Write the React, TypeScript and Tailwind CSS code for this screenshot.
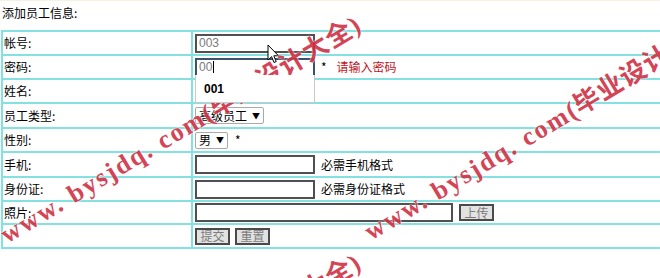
import React, { FC, ReactNode } from "react"

const font = "font-['Noto_Sans_CJK_SC','Liberation_Sans',sans-serif]"

type RowProps = {
    label?: string
    h: string
    children?: ReactNode
}

const Row: FC<RowProps> = ({ label, h, children }) => (
    <div className={`flex border-b-2 border-[#84e1e1] ${h}`}>
        <div className="w-[190px] shrink-0 border-r-2 border-[#84e1e1] pl-[1px] flex items-center">
            {label}
        </div>
        <div className="relative flex items-center gap-[6px] pl-[2px]">{children}</div>
    </div>
)

const Box: FC<{ w: string; value?: string }> = ({ w, value }) => (
    <div className={`h-[19px] ${w} border-2 border-[#505050] bg-white px-[2px] flex items-center
                    font-['Liberation_Sans',sans-serif] text-[12px] text-[#7a7a7a]`}>
        {value}
    </div>
)

const Select: FC<{ text: string; w: string }> = ({ text, w }) => (
    <div className={`h-[17px] ${w} border border-[#a9a9a9] rounded-[2px] bg-white pl-[3px] flex items-center gap-[5px]`}>
        <span>{text}</span>
        <span className="text-[8px]">▼</span>
    </div>
)

const Btn: FC<{ text: string }> = ({ text }) => (
    <div className="h-[17px] w-[35px] border-2 border-[#4a4a4a] bg-[#e2e2e2] flex items-center justify-center
                    text-[12px] text-[#7c7c7c]">
        {text}
    </div>
)

// watermark over the page
const Mark: FC<{ pos: string }> = ({ pos }) => (
    <span className={`absolute ${pos} whitespace-nowrap origin-left -rotate-[31deg] leading-[28px] text-[26px] font-bold
                      text-[#cf3144] opacity-90 [text-shadow:0_0_2px_#fff,0_0_1px_#fff]
                      font-['Liberation_Serif','Noto_Sans_CJK_SC',serif]`}>
        <span className="tracking-[2px]">www. bysjdq. com</span>
        <span className="tracking-[1px]">(毕业设计大全)</span>
    </span>
)

const App: FC = () => {
    return (
        <div className={`relative w-[660px] h-[278px] overflow-hidden bg-white text-[12px] text-black ${font}`}>
            <div className="h-px bg-[#f5f2e2]"/>
            <div className="h-[29px] pl-[2px] pt-[4px] leading-[16px]">添加员工信息:</div>

            <div className="ml-px w-[720px] border-t-2 border-l-2 border-[#84e1e1]">
                <Row label="帐号:" h="h-[24px]">
                    <Box w="w-[120px]" value="003"/>
                </Row>
                <Row label="密码:" h="h-[24px]">
                    <div className="h-[19px] w-[120px] border-2 border-[#3a536d] bg-white px-[2px] flex items-center
                                    font-['Liberation_Sans',sans-serif] text-[12px] text-[#7a7a7a]">
                        00<span className="ml-px w-px h-[12px] bg-black"/>
                    </div>
                    <span>*</span>
                    <span className="ml-[4px] text-[#c0141c]">请输入密码</span>
                    <div className="absolute left-[2px] top-[19px] z-10 w-[120px] h-[28px] bg-white border-x border-b
                                    border-[#c9c9c9] pl-[8px] pt-[5px] font-['Liberation_Sans',sans-serif] font-bold text-[12px]">
                        001
                    </div>
                </Row>
                <Row label="姓名:" h="h-[24px]"/>
                <Row label="员工类型:" h="h-[25px]">
                    <Select text="高级员工" w="w-[69px]"/>
                </Row>
                <Row label="性别:" h="h-[24px]">
                    <Select text="男" w="w-[33px]"/>
                    <span className="ml-[1px]">*</span>
                </Row>
                <Row label="手机:" h="h-[25px]">
                    <Box w="w-[120px]"/>
                    <span>必需手机格式</span>
                </Row>
                <Row label="身份证:" h="h-[24px]">
                    <Box w="w-[120px]"/>
                    <span>必需身份证格式</span>
                </Row>
                <Row label="照片:" h="h-[23px]">
                    <Box w="w-[258px]"/>
                    <Btn text="上传"/>
                </Row>
                <Row h="h-[24px]">
                    <div className="flex gap-[5px]">
                        <Btn text="提交"/>
                        <Btn text="重置"/>
                    </div>
                </Row>
            </div>

            <svg className="absolute left-[267px] top-[44px]" width="13" height="20" viewBox="0 0 13 20">
                <path d="M1 1 L1 16 L4.6 12.6 L7 18.5 L9.2 17.6 L6.8 11.8 L11.5 11.8 Z"
                      fill="#fff" stroke="#000" strokeWidth="1" strokeLinejoin="round"/>
            </svg>

            <div className="pointer-events-none absolute inset-0">
                <Mark pos="left-[3px] top-[223px]"/>
                <Mark pos="left-[367px] top-[220px]"/>
                <Mark pos="left-[3px] top-[461px]"/>
                <Mark pos="left-[367px] top-[458px]"/>
            </div>
        </div>
    )
}

export default App
